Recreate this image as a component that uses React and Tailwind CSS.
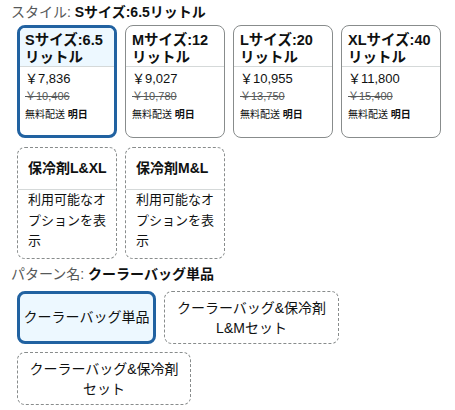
import React from "react";

const font = { fontFamily: '"Liberation Sans", "Noto Sans CJK JP", sans-serif' };

const sizes = [
  { l1: "Sサイズ:6.5", l2: "リットル", price: "￥7,836", old: "￥10,406", sel: true },
  { l1: "Mサイズ:12", l2: "リットル", price: "￥9,027", old: "￥10,780" },
  { l1: "Lサイズ:20", l2: "リットル", price: "￥10,955", old: "￥13,750" },
  { l1: "XLサイズ:40", l2: "リットル", price: "￥11,800", old: "￥15,400" },
];

function SizeCard({ s }) {
  return (
    <div
      className={
        "w-[100px] h-[113px] rounded-[8px] overflow-hidden flex flex-col bg-white " +
        (s.sel ? "border-[3px] border-[#2162a1]" : "border border-[#888c8c]")
      }
    >
      <div
        className={
          "border-b border-[#d5d9d9] text-[14.5px] font-bold leading-[17px] text-[#0f1111] whitespace-nowrap " +
          (s.sel ? "bg-[#edf8ff] h-[39px] px-[5px] pt-[4px]" : "h-[41px] px-[6px] pt-[6px]")
        }
      >
        <div>{s.l1}</div>
        <div>{s.l2}</div>
      </div>
      <div className={s.sel ? "px-[5px] pt-[3px]" : "px-[6px] pt-[3px]"}>
        <div className="text-[13px] leading-[18px] text-[#0f1111]">{s.price}</div>
        <div className="text-[11px] leading-[16px] text-[#565959] line-through">{s.old}</div>
        <div className="text-[10px] leading-[16px] text-[#0f1111] mt-[3px]">
          無料配送 <span className="font-bold">明日</span>
        </div>
      </div>
    </div>
  );
}

function OptionCard({ title }) {
  return (
    <div className="w-[100px] h-[112px] rounded-[8px] border border-dashed border-[#888c8c] flex flex-col bg-white">
      <div className="h-[42px] border-b border-[#d5d9d9] px-[10px] flex items-center text-[14px] font-bold text-[#0f1111] leading-[17px] whitespace-nowrap">
        {title}
      </div>
      <div className="px-[10px] pt-[0px] text-[13px] leading-[20.5px] text-[#0f1111]">
        利用可能なオプションを表示
      </div>
    </div>
  );
}

export default function App() {
  return (
    <div className="w-[455px] h-[410px] bg-white pl-[11px] pt-[3px]" style={font}>
      <div className="text-[14px] leading-[19px] text-[#0f1111]">
        <span className="text-[#565959]">スタイル: </span>
        <span className="font-bold">Sサイズ:6.5リットル</span>
      </div>
      <div className="pl-[6px] mt-[3px] flex flex-col gap-[9px]">
        <div className="flex gap-[8px]">
          {sizes.map((s, i) => (
            <SizeCard key={i} s={s} />
          ))}
        </div>
        <div className="flex gap-[8px]">
          <OptionCard title="保冷剤L&XL" />
          <OptionCard title="保冷剤M&L" />
        </div>
      </div>
      <div className="mt-[6px] text-[14px] leading-[19px] text-[#0f1111]">
        <span className="text-[#565959]">パターン名: </span>
        <span className="font-bold">クーラーバッグ単品</span>
      </div>
      <div className="pl-[6px] mt-[7px] flex flex-col gap-[8px]">
        <div className="flex gap-[8px]">
          <div className="w-[139px] h-[53px] rounded-[8px] border-[3px] border-[#2162a1] bg-[#edf8ff] flex items-center justify-center text-[14px] text-[#0f1111] whitespace-nowrap">
            クーラーバッグ単品
          </div>
          <div className="w-[175px] h-[53px] rounded-[8px] border border-dashed border-[#888c8c] flex items-center justify-center text-center text-[14px] leading-[20px] text-[#0f1111]">
            クーラーバッグ&保冷剤
            <br />
            L&Mセット
          </div>
        </div>
        <div className="flex">
          <div className="w-[174px] h-[53px] rounded-[8px] border border-dashed border-[#888c8c] flex items-center justify-center text-center text-[14px] leading-[20px] text-[#0f1111]">
            クーラーバッグ&保冷剤
            <br />
            セット
          </div>
        </div>
      </div>
    </div>
  );
}
